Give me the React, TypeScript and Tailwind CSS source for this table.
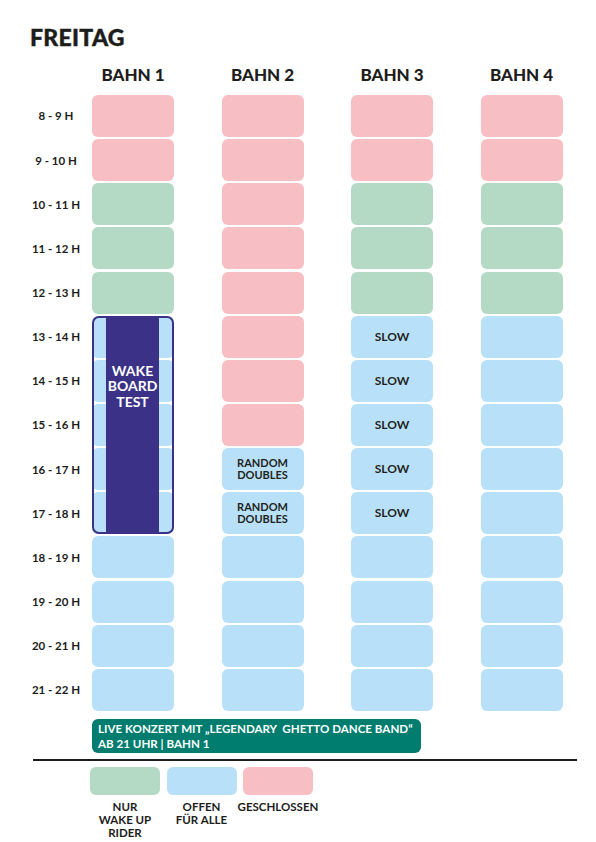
const PINK = "bg-[#f7bec3]";
const GREEN = "bg-[#b4d9c4]";
const BLUE = "bg-[#b8e1f9]";

type Kind = "p" | "g" | "b";

const times = [
  "8 - 9 H",
  "9 - 10 H",
  "10 - 11 H",
  "11 - 12 H",
  "12 - 13 H",
  "13 - 14 H",
  "14 - 15 H",
  "15 - 16 H",
  "16 - 17 H",
  "17 - 18 H",
  "18 - 19 H",
  "19 - 20 H",
  "20 - 21 H",
  "21 - 22 H",
];

const lanes: { name: string; cells: { kind: Kind; text?: string }[] }[] = [
  {
    name: "BAHN 1",
    cells: [
      { kind: "p" }, { kind: "p" }, { kind: "g" }, { kind: "g" }, { kind: "g" },
      { kind: "b" }, { kind: "b" }, { kind: "b" }, { kind: "b" }, { kind: "b" },
      { kind: "b" }, { kind: "b" }, { kind: "b" }, { kind: "b" },
    ],
  },
  {
    name: "BAHN 2",
    cells: [
      { kind: "p" }, { kind: "p" }, { kind: "p" }, { kind: "p" }, { kind: "p" },
      { kind: "p" }, { kind: "p" }, { kind: "p" },
      { kind: "b", text: "RANDOM DOUBLES" }, { kind: "b", text: "RANDOM DOUBLES" },
      { kind: "b" }, { kind: "b" }, { kind: "b" }, { kind: "b" },
    ],
  },
  {
    name: "BAHN 3",
    cells: [
      { kind: "p" }, { kind: "p" }, { kind: "g" }, { kind: "g" }, { kind: "g" },
      { kind: "b", text: "SLOW" }, { kind: "b", text: "SLOW" }, { kind: "b", text: "SLOW" },
      { kind: "b", text: "SLOW" }, { kind: "b", text: "SLOW" },
      { kind: "b" }, { kind: "b" }, { kind: "b" }, { kind: "b" },
    ],
  },
  {
    name: "BAHN 4",
    cells: [
      { kind: "p" }, { kind: "p" }, { kind: "g" }, { kind: "g" }, { kind: "g" },
      { kind: "b" }, { kind: "b" }, { kind: "b" }, { kind: "b" }, { kind: "b" },
      { kind: "b" }, { kind: "b" }, { kind: "b" }, { kind: "b" },
    ],
  },
];

const bg = (k: Kind) => (k === "p" ? PINK : k === "g" ? GREEN : BLUE);

function Cell({ kind, text }: { kind: Kind; text?: string }) {
  const slow = text === "SLOW";
  return (
    <div
      className={`${bg(kind)} h-[42px] w-[82px] rounded-[6px] flex items-center justify-center text-center leading-[12px] font-bold text-[#231f20] px-2 ${slow ? "text-[12px]" : "text-[11px]"}`}
    >
      {text}
    </div>
  );
}

function Lane({ name, cells, wake }: { name: string; cells: { kind: Kind; text?: string }[]; wake?: boolean }) {
  return (
    <div className="flex flex-col w-[82px]">
      <div className="h-[29px] text-center text-[17px] leading-none font-black text-[#1d1d1b]">{name}</div>
      <div className="flex flex-col gap-y-[2.15px]">
        {wake ? (
          <>
            {cells.slice(0, 5).map((c, i) => (
              <Cell key={i} {...c} />
            ))}
            <div className="relative flex flex-col gap-y-[2.15px]">
              {cells.slice(5, 10).map((c, i) => (
                <Cell key={i} {...c} />
              ))}
              {/* wakeboard test block over bahn 1 */}
              <div className="absolute inset-0 border-2 border-[#3b3287] rounded-[7px] flex justify-center">
                <div className="w-[53px] ml-[-1px] bg-[#3b3287] pt-[45px] text-center text-white font-bold text-[14px] leading-[15.5px]">
                  WAKE
                  <br />
                  BOARD
                  <br />
                  TEST
                </div>
              </div>
            </div>
            {cells.slice(10).map((c, i) => (
              <Cell key={i + 10} {...c} />
            ))}
          </>
        ) : (
          cells.map((c, i) => <Cell key={i} {...c} />)
        )}
      </div>
    </div>
  );
}

export default function App() {
  return (
    <div className="w-[596px] h-[842px] bg-white font-['Lato',sans-serif] text-[#1d1d1b] overflow-hidden">
      <div className="pt-[26px] pl-[30px] text-[23px] leading-none font-black tracking-[0.3px] [-webkit-text-stroke:0.4px_#1d1d1b]">
        FREITAG
      </div>
      <div className="flex mt-[17px] pl-[20px]">
        <div className="flex flex-col w-[72px]">
          <div className="h-[29px]" />
          <div className="flex flex-col gap-y-[2.15px]">
            {times.map((t) => (
              <div key={t} className="h-[42px] flex items-center justify-center text-[11.5px] font-bold whitespace-nowrap">
                {t}
              </div>
            ))}
          </div>
        </div>
        <div className="flex gap-x-[47.5px]">
          {lanes.map((l, i) => (
            <Lane key={l.name} name={l.name} cells={l.cells} wake={i === 0} />
          ))}
        </div>
      </div>
      <div className="ml-[92px] mt-[8px] w-[329px] h-[34px] rounded-[6px] bg-[#007d6e] text-white font-bold text-[11.6px] leading-[15px] pl-[6px] flex flex-col justify-center">
        <div className="whitespace-pre">LIVE KONZERT MIT „LEGENDARY  GHETTO DANCE BAND“</div>
        <div>AB 21 UHR | BAHN 1</div>
      </div>
      <div className="ml-[33px] mt-[6px] w-[544px] h-[2px] bg-[#1d1d1b]" />
      <div className="flex ml-[90px] mt-[6px] gap-x-[6.5px]">
        {[
          { c: GREEN, l: ["NUR", "WAKE UP", "RIDER"] },
          { c: BLUE, l: ["OFFEN", "FÜR ALLE"] },
          { c: PINK, l: ["GESCHLOSSEN"] },
        ].map((x, i) => (
          <div key={i} className="flex flex-col items-center w-[70px]">
            <div className={`${x.c} w-[70px] h-[28px] rounded-[6px]`} />
            <div className="mt-[5px] text-center text-[11.5px] leading-[13px] font-bold whitespace-nowrap">
              {x.l.map((s) => (
                <div key={s}>{s}</div>
              ))}
            </div>
          </div>
        ))}
      </div>
    </div>
  );
}
